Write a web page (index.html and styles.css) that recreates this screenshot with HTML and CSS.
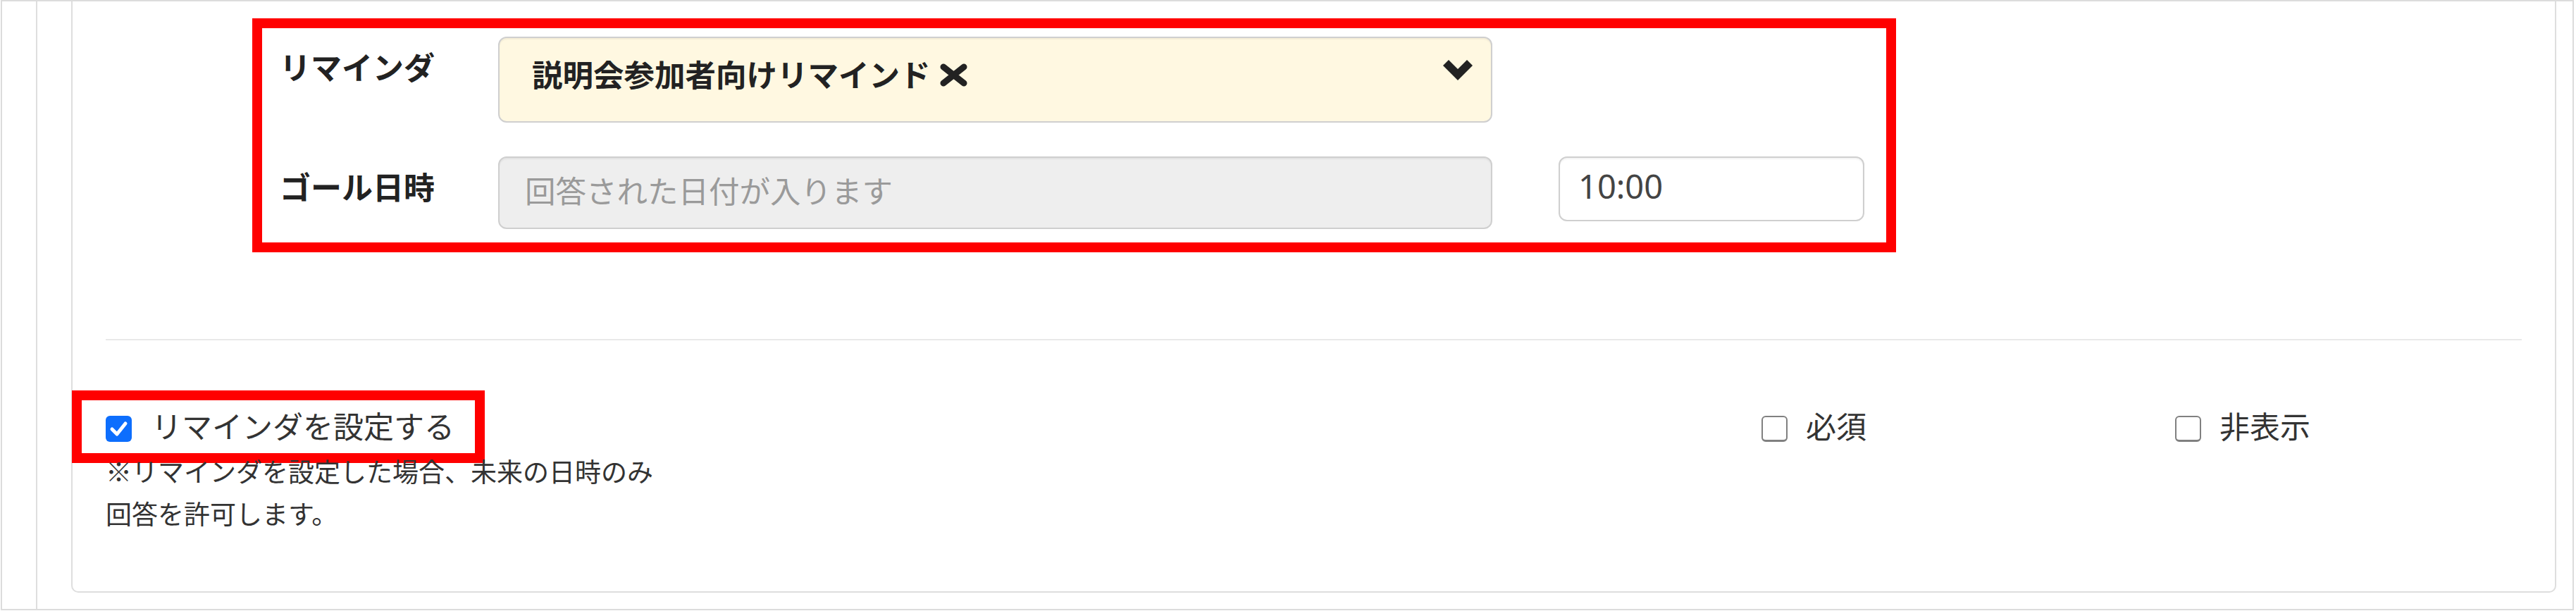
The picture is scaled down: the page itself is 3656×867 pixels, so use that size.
FILE: index.html
```html
<!DOCTYPE html>
<html lang="ja">
<head>
<meta charset="utf-8">
<title>リマインダ設定</title>
<link rel="stylesheet" href="styles.css">
</head>
<body>
<div class="frame">
  <div class="panel">
    <div class="card">
      <div class="reminder-form">
        <div class="label">リマインダ</div>
        <div class="select">
          <span class="tag">説明会参加者向けリマインド<svg class="tag-x" viewBox="0 0 39 33" width="39" height="33"><path d="M5 5 L34 28 M34 5 L5 28" stroke="#222" stroke-width="9" stroke-linecap="round" fill="none"/></svg></span>
          <svg class="chevron" viewBox="0 0 42 29" width="42" height="29"><path d="M0 8 L8 0 L21 13 L34 0 L42 8 L21 29 Z" fill="#222"/></svg>
        </div>
        <div class="label">ゴール日時</div>
        <div class="field field-disabled">回答された日付が入ります</div>
        <div class="field field-time">10:00</div>
      </div>
      <hr class="divider">
      <div class="options">
        <div class="option-main">
          <span class="callout">
            <label class="check"><span class="box box-checked"><svg viewBox="0 0 37 37" width="37" height="37"><path d="M9 19 L16 26 L28 11" stroke="#fff" stroke-width="5" fill="none" stroke-linecap="round" stroke-linejoin="round"/></svg></span><span class="check-text">リマインダを設定する</span></label>
          </span>
          <p class="note">※リマインダを設定した場合、未来の日時のみ<br>回答を許可します。</p>
        </div>
        <label class="check"><span class="box"></span><span class="check-text">必須</span></label>
        <label class="check"><span class="box"></span><span class="check-text">非表示</span></label>
      </div>
    </div>
  </div>
</div>
</body>
</html>
```
FILE: styles.css
```css
* { box-sizing: border-box; }
html, body { margin: 0; padding: 0; background: #fff; }
body {
  font-family: "Noto Sans CJK JP", "Noto Sans", sans-serif;
  color: #333;
}
.frame {
  margin: 0 3px 0 1px;
  border: 2px solid #dcdcdc;
  padding-left: 48px;
}
.panel {
  border-left: 2px solid #dedede;
  padding: 0 23px 23px 48px;
}
.card {
  border: 2px solid #dedede;
  border-top: 0;
  border-radius: 0 0 10px 10px;
  padding: 38px 47px 81px 47px;
}
.reminder-form {
  display: grid;
  width: fit-content;
  margin-left: 222px;
  grid-template-columns: 216px 1411px 434px;
  column-gap: 94px;
  row-gap: 48px;
  align-items: start;
  padding: 12px 31px 19px 25px;
  outline: 14px solid #ff0000;
}
.label {
  grid-column: 1;
  font-size: 44px;
  font-weight: 700;
  color: #222;
  padding-top: 10px;
  white-space: nowrap;
}
.select {
  grid-column: 2;
  height: 122px;
  background: #fff8e1;
  border: 2px solid #cfcfcf;
  border-radius: 12px;
  box-shadow: inset 0 2px 2px rgba(0,0,0,0.05);
  padding: 19px 26px 0 46px;
  display: flex;
  justify-content: space-between;
  align-items: flex-start;
}
.tag {
  display: inline-flex;
  align-items: center;
  gap: 13px;
  font-size: 43.5px;
  font-weight: 700;
  color: #222;
}
.tag-x { display: block; margin-top: 3px; }
.chevron { display: block; margin-top: 12px; }
.field {
  height: 103px;
  border: 2px solid #cfcfcf;
  border-radius: 12px;
  box-shadow: inset 0 2px 2px rgba(0,0,0,0.05);
  display: flex;
  align-items: center;
  font-size: 43.5px;
}
.field-disabled {
  background: #eeeeee;
  color: #9a9a9a;
  padding: 0 0 9px 36px;
}
.field-time {
  height: 92px;
  background: #fff;
  color: #444;
  font-family: "Noto Sans", sans-serif;
  font-size: 47px;
  padding: 0 0 8px 26px;
}
.divider {
  border: 0;
  border-top: 2px solid #e9e9e9;
  margin: 137px 0 0 0;
  height: 0;
}
.options {
  display: grid;
  grid-template-columns: 2350px 587px 1fr;
  align-items: start;
  margin-top: 89px;
}
.option-main {
  display: flex;
  flex-direction: column;
  align-items: flex-start;
}
.callout {
  display: flex;
  padding: 4px 29px 9px 34px;
  margin: -4px -29px -9px -34px;
  outline: 14px solid #ff0000;
}
.check {
  display: flex;
  align-items: center;
  font-size: 43px;
  color: #333;
}
.box {
  width: 37px;
  height: 37px;
  border-radius: 6px;
  border: 2px solid #808080;
  border-bottom-width: 3px;
  background: #fff;
  margin-top: 10px;
  margin-right: 26px;
  flex: none;
}
.box-checked {
  border: 0;
  background: #0d6efd;
  margin-right: 28px;
}
.box svg { display: block; }
.note {
  margin: 4px 0 0 0;
  font-size: 37px;
  line-height: 60px;
  color: #333;
}
```
